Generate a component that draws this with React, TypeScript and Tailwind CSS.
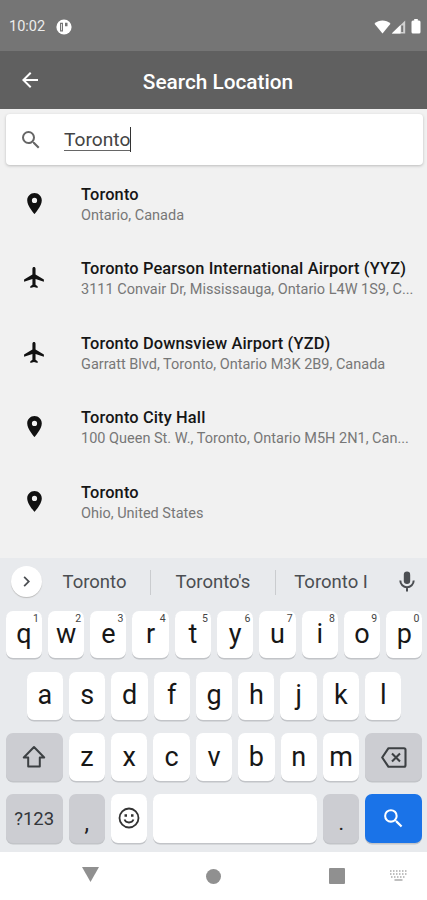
import { clsx } from "clsx";
import type { ReactNode } from "react";
import {
  MdArrowBack,
  MdFlight,
  MdKeyboardArrowRight,
  MdPlace,
  MdSearch,
} from "react-icons/md";

type Place = {
  id: number;
  type: "place" | "airport";
  name: string;
  address: string;
};

const places: Place[] = [
  { id: 1, type: "place", name: "Toronto", address: "Ontario, Canada" },
  {
    id: 2,
    type: "airport",
    name: "Toronto Pearson International Airport (YYZ)",
    address: "3111 Convair Dr, Mississauga, Ontario L4W 1S9, C...",
  },
  {
    id: 3,
    type: "airport",
    name: "Toronto Downsview Airport (YZD)",
    address: "Garratt Blvd, Toronto, Ontario M3K 2B9, Canada",
  },
  {
    id: 4,
    type: "place",
    name: "Toronto City Hall",
    address: "100 Queen St. W., Toronto, Ontario M5H 2N1, Can...",
  },
  { id: 5, type: "place", name: "Toronto", address: "Ohio, United States" },
];

function StatusBar() {
  return (
    <div className="flex h-[51px] items-center bg-[#757575] pl-[9px] pr-[6px] pt-[2px] text-white">
      <span className="text-[14.5px] text-[#ececec]">10:02</span>
      <svg viewBox="0 0 16 16" className="ml-[11px] h-4 w-4">
        <circle cx="8" cy="8" r="7.6" fill="white" />
        <path d="M4 3.800h3v8.700H4zM9 3.800h2.500v3.400H9z" fill="#757575" />
        <path d="M5 5h.8v6.300H5z" fill="white" />
      </svg>
      <div className="ml-auto flex items-center">
        <svg viewBox="0 0 17 14" className="mr-[0.5px] h-[14px] w-[17px]">
          <path d="M.5 3.800C5-.6 12-.6 16.500 3.800L8.500 13.500z" fill="white" />
        </svg>
        <svg viewBox="0 0 15 14" className="h-[14px] w-[15px]">
          <path d="M.8 13.500 14.200.5v13z" fill="#d0d0d0" />
          <path d="M.8 13.500 9.500 5v8.500z" fill="white" />
          <path d="M11.200 5.500v6.500" stroke="#757575" strokeWidth="2" />
        </svg>
        <svg viewBox="0 0 10 15" className="ml-[5px] h-[15px] w-[10px]">
          <path d="M3.200 0h3.600v1.500h1.200q1.500 0 1.500 1.500v10q0 1.500-1.500 1.500H2Q.5 14.500.5 13V3Q.5 1.500 2 1.500h1.200z" fill="white" />
        </svg>
      </div>
    </div>
  );
}

function Header() {
  return (
    <header className="grid h-[58px] grid-cols-[62px_1fr_53px] items-center bg-[#606060] pt-[2px] text-white">
      <button className="pb-[2px] pl-[18px]">
        <MdArrowBack className="h-[24px] w-[24px]" />
      </button>
      <h1 className="pt-[3px] text-center text-[20.8px] font-medium">Search Location</h1>
    </header>
  );
}

function PlaceRow({ place }: { place: Place }) {
  const Icon = place.type === "airport" ? MdFlight : MdPlace;
  return (
    <li className="flex h-[74.6px] items-start">
      <div className="w-[81px] shrink-0 pl-[22px] pt-[10.6px]">
        <Icon className="h-[25px] w-[25px] text-[#111]" />
      </div>
      <div className="min-w-0 whitespace-nowrap pt-[3.6px]">
        <p className="text-[16.4px] leading-[21px] font-medium tracking-[0.14px] text-[#161616]">{place.name}</p>
        <p className="text-[14.5px] leading-[21px] text-[#777]">{place.address}</p>
      </div>
    </li>
  );
}

type KeyProps = {
  children?: ReactNode;
  className?: string;
  hint?: string;
};

function Key({ children, className, hint }: KeyProps) {
  return (
    <button
      className={clsx(
        "relative flex h-full min-w-0 items-center justify-center rounded-[7px] text-[27px] leading-none shadow-[0_1.5px_0_#c2c4c8]",
        className ?? "flex-1 bg-white text-[#171717]",
      )}
    >
      {children}
      {hint && <span className="absolute right-[3px] top-[3px] text-[10.5px] leading-none text-[#444]">{hint}</span>}
    </button>
  );
}

function SuggestionBar() {
  return (
    <div className="flex h-[53px] items-center pr-[10px] pl-[11px] text-[18.5px] text-[#4b4e52]">
      <button className="mt-[-7px] flex h-[31px] w-[31px] shrink-0 items-center justify-center rounded-full bg-white shadow-[0_1px_1px_#bbb]">
        <MdKeyboardArrowRight className="h-[21px] w-[21px]" />
      </button>
      <div className="mt-[-5px] flex flex-1 items-center">
        <span className="w-[108px] pr-[3px] pt-[2px] text-center">Toronto</span>
        <span className="h-[25px] w-px bg-[#cacccf]" />
        <span className="w-[124px] pt-[2px] text-center">Toronto's</span>
        <span className="h-[25px] w-px bg-[#cacccf]" />
        <span className="w-[110px] pt-[2px] text-center">Toronto I</span>
      </div>
      <svg viewBox="0 0 16 21" className="mt-[-7px] mr-[2px] h-[21px] w-[16px] shrink-0" fill="none">
        <rect x="4.800" y="0.500" width="6.400" height="12.500" rx="3.200" fill="currentColor" />
        <path d="M1.300 9.500a6.700 6.700 0 0 0 13.400 0M8 16v4.500" stroke="currentColor" strokeWidth="2" />
      </svg>
    </div>
  );
}

function Keyboard() {
  return (
    <section className="h-[294px] bg-[#e8eaed]">
      <SuggestionBar />
      <div className="flex h-[47px] gap-[6px] pr-[4.7px] pl-[5.7px]">
        {"qwertyuiop".split("").map((letter, i) => (
          <Key key={letter} hint={String((i + 1) % 10)}>
            {letter}
          </Key>
        ))}
      </div>
      <div className="mt-[14px] flex h-[47.5px] gap-[6px] pr-[25.7px] pl-[26.8px]">
        {"asdfghjkl".split("").map((letter) => (
          <Key key={letter}>{letter}</Key>
        ))}
      </div>
      <div className="mt-[13.5px] flex h-[48px] gap-[6px] pr-[4.7px] pl-[5.7px]">
        <Key className="w-[57px] shrink-0 bg-[#cccdd2] text-[#3c4043]">
          <svg viewBox="0 0 24 24" className="h-[24px] w-[24px]" fill="none" stroke="currentColor" strokeWidth="2" strokeLinejoin="round">
            <path d="M12 2 1.800 12.500h4.400v9h11.600v-9h4.400z" />
          </svg>
        </Key>
        {"zxcvbnm".split("").map((letter) => (
          <Key key={letter}>{letter}</Key>
        ))}
        <Key className="w-[57px] shrink-0 bg-[#cccdd2] pt-px text-[#3c4043]">
          <svg viewBox="0 0 26 21" className="h-[21px] w-[26px]" fill="none" stroke="currentColor" strokeWidth="2.100" strokeLinejoin="round">
            <path d="M7.500 1.200h15.500q1.500 0 1.500 1.500v15.600q0 1.500-1.500 1.500H7.500L1.200 10.500z" />
            <path d="m11 6.500 8 8M19 6.500l-8 8" />
          </svg>
        </Key>
      </div>
      <div className="mt-[13px] flex h-[49px] gap-[6px] pr-[4.7px] pl-[5.7px]">
        <Key className="w-[57px] shrink-0 bg-[#cccdd2] pt-[2px] text-[#33363a]">
          <span className="text-[18.5px]">?123</span>
        </Key>
        <Key className="w-[36.3px] shrink-0 bg-[#cccdd2] pt-[9px] text-[#222]">
          <span className="text-[23px]">,</span>
        </Key>
        <Key className="w-[36.3px] shrink-0 bg-white pb-px text-[#333]">
          <svg viewBox="0 0 22 22" className="h-[22px] w-[22px]" fill="none" stroke="currentColor" strokeWidth="1.8">
            <circle cx="11" cy="11" r="9.500" />
            <path d="M6.500 8.500h2.500M13 8.500h2.500" strokeWidth="2.300" />
            <path d="M6.500 12.500c1.500 4 7.500 4 9 0" />
          </svg>
        </Key>
        <Key className="flex-1 bg-white" />
        <Key className="w-[36.3px] shrink-0 bg-[#cccdd2] pt-[9px] text-[#222]">
          <span className="text-[21px]">.</span>
        </Key>
        <Key className="w-[57px] shrink-0 bg-[#1a73e8] text-white">
          <MdSearch className="h-[25px] w-[25px]" />
        </Key>
      </div>
    </section>
  );
}

function NavigationBar() {
  return (
    <nav className="flex h-[48px] items-center bg-white pl-[82px] text-[#909090]">
      <svg viewBox="0 0 17 15" className="mt-[-3px] h-[15px] w-[17px]">
        <path d="M0 0h17L8.500 15z" fill="currentColor" />
      </svg>
      <span className="ml-[107px] h-[15px] w-[15px] rounded-full bg-[#909090]" />
      <span className="mt-[-1px] ml-[108px] h-4 w-4 rounded-[1px] bg-[#909090]" />
      <svg viewBox="0 0 17 11" className="mt-[-2px] ml-[45px] h-[11px] w-[17px]" fill="none" stroke="#aaa">
        <path d="M0 1h17M0 4h17M1 7h15" strokeWidth="1.500" strokeDasharray="1.500 1.500" />
        <path d="M4.500 10h8" strokeWidth="1.500" />
      </svg>
    </nav>
  );
}

export default function App() {
  return (
    <div className="flex h-[900px] w-[427px] flex-col overflow-hidden bg-[#f1f1f1] font-[Roboto,sans-serif]">
      <StatusBar />
      <Header />
      <main className="flex-1">
        <div className="mr-[4.5px] ml-[6px] mt-[5px] flex h-[51px] items-center rounded-[4px] bg-white pl-[13px] shadow-[0_1px_3px_#bbb]">
          <MdSearch className="h-[24px] w-[24px] text-[#666]" />
          <div className="ml-[21px] flex items-center text-[19.2px] text-[#444]">
            <span className="border-b border-[#666] pt-[1px] leading-[20px]">Toronto</span>
            <span className="h-[25px] w-px bg-[#333]" />
          </div>
        </div>
        <ul className="mt-[15px]">
          {places.map((place) => (
            <PlaceRow key={place.id} place={place} />
          ))}
        </ul>
      </main>
      <Keyboard />
      <NavigationBar />
    </div>
  );
}
